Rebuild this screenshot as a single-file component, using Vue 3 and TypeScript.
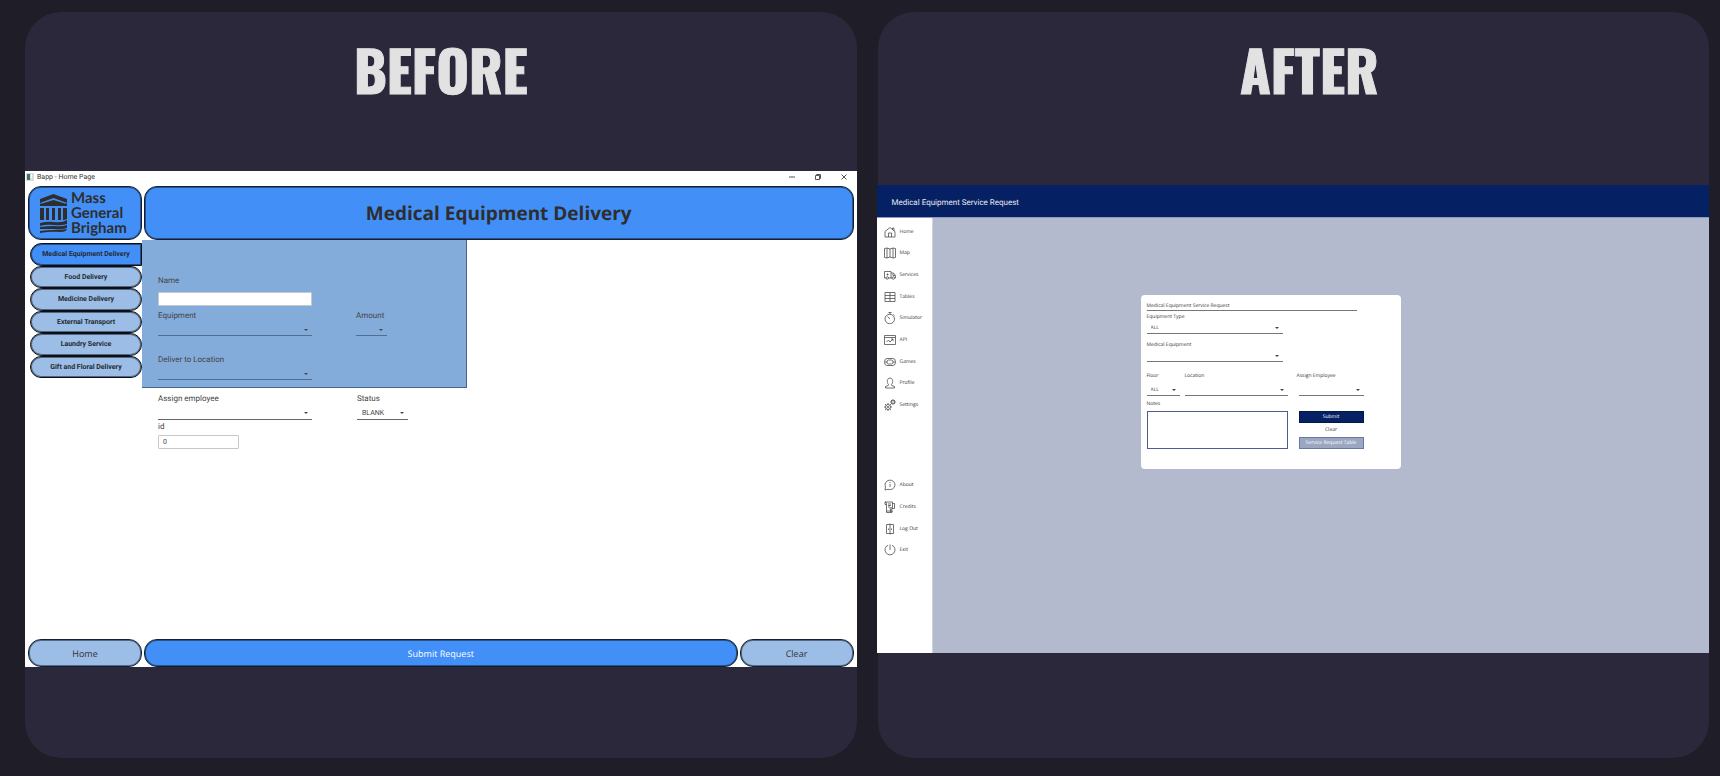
<script setup lang="ts">
import { ref } from 'vue'

interface NavItem {
  label: string
  paths: string[]
}

const services: string[] = [
  'Medical Equipment Delivery',
  'Food Delivery',
  'Medicine Delivery',
  'External Transport',
  'Laundry Service',
  'Gift and Floral Delivery',
]
const activeService = ref(services[0])

const mainNav: NavItem[] = [
  { label: 'Home', paths: ['M2 11 12 3l10 8v11H2z', 'M9 22v-8h6v8', 'M17 7V4h3v6'] },
  { label: 'Map', paths: ['M1 3l5-1 6 2 6-2 5 1v18l-5 1-6-2-6 2-5-1z', 'M6 2v20M12 4v16M18 2v20'] },
  { label: 'Services', paths: ['M4 18H1V5h13v13H9', 'M14 8h5l4 5v5h-2M14 18h2', 'M4 18a2.5 2.5 0 1 0 5 0a2.5 2.5 0 1 0-5 0M16 18a2.5 2.5 0 1 0 5 0a2.5 2.5 0 1 0-5 0', 'M7 9v4M5 11h4M18 9v4h4'] },
  { label: 'Tables', paths: ['M2 3h20v18H2z', 'M2 9h20M2 15h20M12 3v18'] },
  { label: 'Simulator', paths: ['M2 14a9.5 9.5 0 1 0 19 0a9.5 9.5 0 1 0-19 0', 'M12 14 7 9M9 1h6M12 1v4M19 5l2 2'] },
  { label: 'API', paths: ['M1 3h22v18H1z', 'M1 7h22', 'M5 16l4-4 3 4 6-6M14 10h4v4'] },
  { label: 'Games', paths: ['M6 5h12a5 7 0 0 1 0 14H6A5 7 0 0 1 6 5z', 'M9 8h6a3 4 0 0 1 0 8H9a3 4 0 0 1 0-8z', 'M2 12h4M18 12h4'] },
  { label: 'Profile', paths: ['M9 15C5 11 6 2 12 2s7 9 3 13l.5 2L21 19v3H3v-3l5.500-2z'] },
  { label: 'Settings', paths: ['M3 16a5 5 0 1 0 10 0a5 5 0 1 0-10 0M6.500 16a1.500 1.500 0 1 0 3 0a1.500 1.500 0 1 0-3 0', 'M8 8v3M8 21v3M0 16h3M13 16h3M2 10l2 2M12 20l2 2M2 22l2-2M12 12l2-2', 'M15 6a3 3 0 1 0 6 0a3 3 0 1 0-6 0M18 0v3M18 9v3M12 6h3M21 6h3M14 2l2 2M20 8l2 2M14 10l2-2M20 4l2-2'] },
]

const footerNav: NavItem[] = [
  { label: 'About', paths: ['M2 22l1-6a10 9.500 0 1 1 5 4.500z', 'M12 10v6M12 6v2'] },
  { label: 'Credits', paths: ['M5 20V5a3 3 0 0 0-3-3h15v13', 'M2 2v5h3M17 15h4V5h-4M5 20h11v3H5z', 'M8 6h6M8 9h6M8 12h4M12 15a2 2 0 1 0 4 0a2 2 0 1 0-4 0M13 17v5M16 17v5'] },
  { label: 'Log Out', paths: ['M5 3h14v18H5z', 'M12 1v22M9 11v3M15 11v3'] },
  { label: 'Exit', paths: ['M8 2.500a10 10 0 1 0 8 0', 'M12 1v11'] },
]
</script>

<template>
  <main class="page">
    <section class="card">
      <h1 class="heading">BEFORE</h1>
      <div class="stage">
        <div class="old">
          <header class="titlebar">
            <svg class="appicon" viewBox="0 0 8 8"><path d="M0 0h8v8H0z" fill="#d9dcdc" /><path d="M1 1h3v6H1z" fill="#3d7472" /><path d="M5 1h1v4H5z" fill="#fff" /></svg>
            <span>Bapp - Home Page</span>
            <div class="controls">
              <button aria-label="Minimize"><svg viewBox="0 0 6 6"><path d="M0 3h6" /></svg></button>
              <button aria-label="Restore"><svg viewBox="0 0 6 6"><path d="M.5 1.500h4v4h-4zM1.500 1.500v-1h4v4h-1" /></svg></button>
              <button aria-label="Close"><svg viewBox="0 0 6 6"><path d="M.5.5l5 5M5.500.5l-5 5" /></svg></button>
            </div>
          </header>

          <div class="old-top">
            <div class="logo box">
              <svg class="temple" viewBox="0 0 27 39">
                <path d="M0 5 13.500 0 27 5v4L13.500 4 0 9zM2 9.500 13.500 6 25 9.500h2V12H0V9.500z" />
                <path d="M0 14h4v12H0zM6 14h3v12H6zM12 14h3v12h-3zM18 14h3v12h-3zM23 14h4v11q-2 1-4 1z" />
                <path d="M0 29q7-2 14-1 8 1 13-2v4q-6 2-13 1-8-1-14 1zM0 33q7-1 14-1 8 1 13-1v3q-6 2-13 1-8 0-14 0zM0 37q7-1 14-1 8 0 13-1-1 3-6 3-10-1-21 1z" />
              </svg>
              <p>Mass<br />General<br />Brigham</p>
            </div>
            <h2 class="banner box">Medical Equipment Delivery</h2>
          </div>

          <div class="old-body">
            <nav class="services">
              <button
                v-for="service in services"
                :key="service"
                :class="{ active: service === activeService }"
                @click="activeService = service"
              >{{ service }}</button>
            </nav>
            <form class="old-form" @submit.prevent>
              <div class="panel">
                <div class="field wide name">
                  <label for="name">Name</label>
                  <input id="name" type="text" />
                </div>
                <div class="row">
                  <div class="field wide">
                    <label for="equipment">Equipment</label>
                    <span class="drop"><select id="equipment"><option></option></select></span>
                  </div>
                  <div class="field amount">
                    <label for="amount">Amount</label>
                    <span class="drop"><select id="amount"><option></option></select></span>
                  </div>
                </div>
                <div class="field wide">
                  <label for="deliver">Deliver to Location</label>
                  <span class="drop"><select id="deliver"><option></option></select></span>
                </div>
              </div>
              <div class="below">
                <div class="row">
                  <div class="field wide">
                    <label for="employee">Assign employee</label>
                    <span class="drop"><select id="employee"><option></option></select></span>
                  </div>
                  <div class="field status">
                    <label for="status">Status</label>
                    <span class="drop"><select id="status"><option>BLANK</option></select></span>
                  </div>
                </div>
                <div class="field ident">
                  <label for="ident">id</label>
                  <input id="ident" type="text" value="0" />
                </div>
              </div>
            </form>
          </div>

          <footer class="old-actions">
            <button class="box pale">Home</button>
            <button class="box submit">Submit Request</button>
            <button class="box pale">Clear</button>
          </footer>
        </div>
      </div>
    </section>

    <section class="card">
      <h1 class="heading after">AFTER</h1>
      <div class="stage">
        <div class="new">
          <header class="new-head">Medical Equipment Service Request</header>
          <div class="new-body">
            <nav class="side">
              <button v-for="item in mainNav" :key="item.label">
                <svg viewBox="0 0 24 24"><path v-for="d in item.paths" :key="d" :d="d" /></svg>{{ item.label }}
              </button>
              <div class="spacer"></div>
              <button v-for="item in footerNav" :key="item.label">
                <svg viewBox="0 0 24 24"><path v-for="d in item.paths" :key="d" :d="d" /></svg>{{ item.label }}
              </button>
            </nav>
            <div class="canvas">
              <form class="request" @submit.prevent>
                <h2>Medical Equipment Service Request</h2>
                <div class="field type">
                  <label for="type">Equipment Type</label>
                  <span class="drop"><select id="type"><option>ALL</option></select></span>
                </div>
                <div class="field medical">
                  <label for="medical">Medical Equipment</label>
                  <span class="drop"><select id="medical"><option></option></select></span>
                </div>
                <div class="trio">
                  <div class="field">
                    <label for="floor">Floor</label>
                    <span class="drop"><select id="floor"><option>ALL</option></select></span>
                  </div>
                  <div class="field">
                    <label for="location">Location</label>
                    <span class="drop"><select id="location"><option></option></select></span>
                  </div>
                  <div class="field assign">
                    <label for="assign">Assign Employee</label>
                    <span class="drop"><select id="assign"><option></option></select></span>
                  </div>
                </div>
                <label class="notes-label" for="notes">Notes</label>
                <div class="bottom">
                  <textarea id="notes"></textarea>
                  <div class="buttons">
                    <button class="primary">Submit</button>
                    <button class="plain">Clear</button>
                    <button class="secondary">Service Request Table</button>
                  </div>
                </div>
              </form>
            </div>
          </div>
        </div>
      </div>
    </section>
  </main>
</template>

<style>
body {
  margin: 0;
  background: #1e1d28;
}
</style>

<style scoped>
* {
  box-sizing: border-box;
}
h1, h2, p {
  margin: 0;
}
button, input, select, textarea {
  font: inherit;
  color: inherit;
  margin: 0;
  padding: 0;
  border: 0;
  background: none;
  border-radius: 0;
  text-rendering: inherit;
}
.page {
  min-height: 100vh;
  display: grid;
  grid-template-columns: 1fr 1fr;
  gap: 21px;
  padding: 12px 11px 18px 25px;
  background: #1e1d28;
  font-family: "Open Sans", "Noto Sans", sans-serif;
  text-rendering: geometricPrecision;
  color: #333;
}
.card {
  min-width: 0;
  display: flex;
  flex-direction: column;
  padding-bottom: 60px;
  border-radius: 36px;
  background: #2a283a;
}
.heading {
  height: 128px;
  padding-top: 18px;
  text-align: center;
  font: 700 56px/80px Oswald, "Liberation Sans Narrow", "Open Sans", sans-serif;
  color: #e2e2e2;
  -webkit-text-stroke: 1px #e2e2e2;
}
.heading.after {
  padding-left: 32px;
}
.stage {
  flex: 1;
  display: flex;
  flex-direction: column;
  justify-content: center;
}

/* Earlier window */
.old {
  min-height: 496px;
  display: flex;
  flex-direction: column;
  background: #fff;
}
.titlebar {
  height: 15px;
  padding: 0 10px 3px 1px;
  display: flex;
  align-items: center;
  gap: 3px;
  font-family: Roboto, "Open Sans", sans-serif;
  font-size: 7px;
}
.appicon {
  width: 8px;
  height: 8px;
}
.controls {
  margin-left: auto;
  display: flex;
  gap: 20px;
}
.controls button {
  width: 6px;
  height: 6px;
  display: flex;
}
.controls svg {
  width: 6px;
  height: 6px;
  fill: none;
  stroke: #555;
  stroke-width: 1;
}
.box {
  border: 1px solid #14202f;
  border-radius: 13px;
  background: #428ff8;
  box-shadow: inset 0 0 0 1px rgba(10, 22, 40, 0.5);
}
.old-top {
  display: grid;
  grid-template-columns: 114px 1fr;
  gap: 2px;
  height: 54px;
  padding: 0 3px;
}
.logo {
  display: flex;
  align-items: center;
  padding-left: 11px;
  gap: 4px;
  color: #2e2e2e;
  font: 700 15px/15px Lato, "Open Sans", sans-serif;
}
.temple {
  width: 27px;
  height: 39px;
  fill: #2e2e2e;
}
.banner {
  display: flex;
  align-items: center;
  justify-content: center;
  font-size: 19px;
  font-weight: 700;
  color: #2e2e2e;
}
.old-body {
  flex: 1;
  display: flex;
}
.services {
  width: 117px;
  height: 138px;
  padding: 3px 0 0 5px;
  display: grid;
  grid-auto-rows: 1fr;
}
.services button {
  border: 1px solid #0c1016;
  border-radius: 12px;
  background: #9bbde6;
  box-shadow: inset 0 0 0 1px rgba(10, 16, 24, 0.5);
  font-family: Roboto, "Open Sans", sans-serif;
  font-size: 7px;
  font-weight: 700;
  color: #252b33;
}
.services .active {
  background: #428ff8;
  border-top-right-radius: 0;
  border-bottom-right-radius: 0;
}
.old-form {
  font-family: Roboto, "Open Sans", sans-serif;
  font-size: 8px;
  line-height: 12px;
  color: #444;
}
.old-form label {
  padding-top: 1px;
}
.panel {
  width: 325px;
  height: 148px;
  padding: 34px 15px 0 16px;
  background: #83acdb;
  border-right: 1px solid #45648a;
  border-bottom: 1px solid #45648a;
}
.below {
  padding: 4px 15px 0 16px;
}
.field {
  display: flex;
  flex-direction: column;
}
.wide {
  width: 154px;
}
.name {
  gap: 5px;
}
.old-form input {
  height: 14px;
  padding: 0 4px;
  background: #fff;
  border: 1px solid #c4c8cc;
  border-radius: 1px;
  font-size: 7px;
}
.row {
  display: flex;
  gap: 45px;
}
.panel .row {
  margin: 3px 0 17px;
  gap: 44px;
}
.drop {
  display: block;
  position: relative;
  border-bottom: 1px solid #666;
}
.drop::after {
  content: "";
  position: absolute;
  right: 4px;
  top: 50%;
  border: 2px solid transparent;
  border-top: 2px solid #444;
  border-bottom: 0;
}
.drop select {
  appearance: none;
  display: block;
  width: 100%;
  height: 14px;
  padding: 1px 0 0 5px;
  font-size: 7px;
  outline: none;
}
.panel .drop {
  border-color: #506e91;
}
.panel .drop select {
  height: 13px;
}
.amount .drop {
  width: 31px;
}
.status .drop {
  width: 51px;
}
.ident {
  width: 81px;
  gap: 2px;
}
.old-actions {
  display: grid;
  grid-template-columns: 114px 1fr 114px;
  gap: 2px;
  height: 28px;
  padding: 0 3px;
  font-size: 9px;
}
.old-actions .pale {
  background: #9bbde6;
}
.old-actions .submit {
  color: #fff;
}

/* Redesigned window */
.new {
  min-height: 468px;
  margin-left: -1px;
  display: flex;
  flex-direction: column;
  background: #fff;
}
.new-head {
  height: 33px;
  padding: 0 15px;
  border-bottom: 1px solid #8c9abf;
  background: #052063;
  color: #e6e9f2;
  font-family: Roboto, "Open Sans", sans-serif;
  font-size: 8px;
  line-height: 35px;
}
.new-body {
  flex: 1;
  display: flex;
}
.side {
  width: 55px;
  padding: 3px 0 92px 7px;
  display: flex;
  flex-direction: column;
}
.side button {
  flex: 10 1 0;
  display: flex;
  align-items: center;
  gap: 4px;
  font-size: 5px;
  color: #333;
}
.side .spacer {
  flex: 27 1 0;
}
.side svg {
  width: 12px;
  height: 12px;
  fill: none;
  stroke: #444;
  stroke-width: 1.500;
}
.canvas {
  flex: 1;
  padding: 77px 0 0 208px;
  background: #b4bace;
  border-left: 1px solid #cdd1df;
}
.request {
  width: 260px;
  height: 174px;
  padding: 7px 36px 20px 6px;
  background: #fff;
  border-radius: 4px;
  font-size: 5px;
  line-height: 8px;
  color: #333;
}
.request h2 {
  width: 210px;
  border-bottom: 1px solid #777;
  font-size: 5px;
  font-weight: 400;
}
.request .drop {
  border-color: #777;
}
.request .drop select {
  height: 12px;
  padding: 2px 0 0 4px;
  font-size: 5px;
}
.type {
  width: 136px;
  margin-top: 2px;
}
.medical {
  width: 136px;
  margin-top: 7px;
}
.trio {
  display: grid;
  grid-template-columns: 33px 103px 71px;
  column-gap: 5px;
  margin-top: 10px;
}
.trio .field {
  gap: 3px;
}
.trio .assign {
  padding-left: 4px;
}
.assign .drop {
  margin-left: 2px;
}
.notes-label {
  display: block;
  margin-top: 4px;
}
.bottom {
  display: grid;
  grid-template-columns: 141px 65px;
  gap: 11px;
  height: 38px;
  margin-top: 3px;
}
.bottom textarea {
  border: 1px solid #4d5c92;
  resize: none;
}
.buttons {
  display: grid;
  grid-template-rows: 12px 1fr 12px;
}
.primary {
  background: #052063;
  border: 1px solid #041845;
  color: #fff;
}
.secondary {
  background: #9ba6c1;
  border: 1px solid #6a78a6;
  color: #fff;
}
</style>
